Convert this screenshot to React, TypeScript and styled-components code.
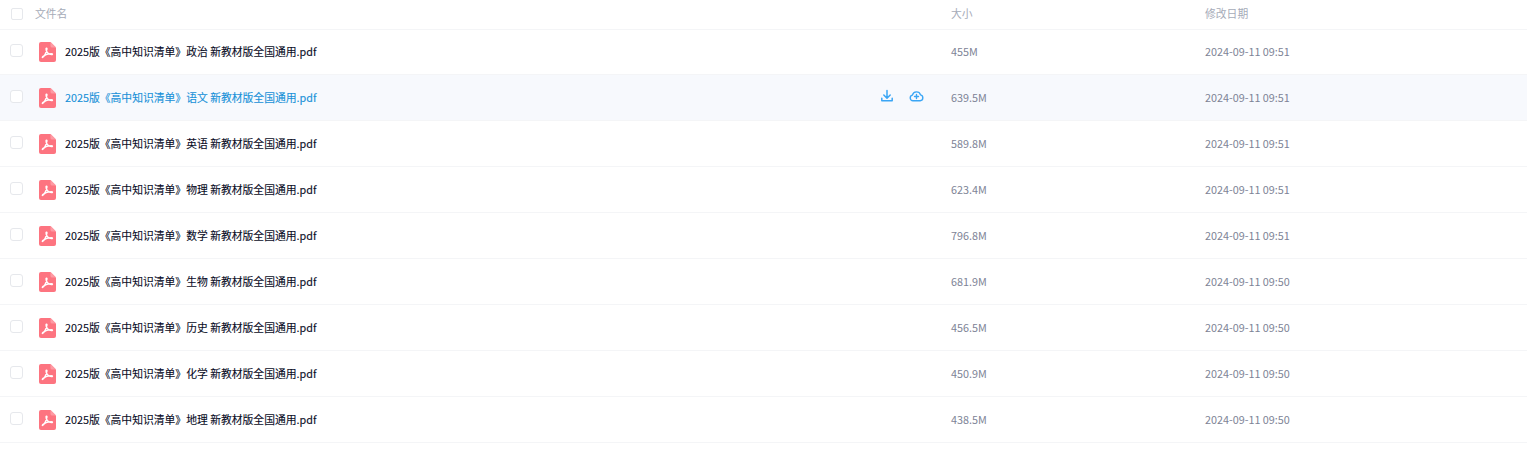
import * as React from 'react';
import styled, { createGlobalStyle } from 'styled-components';

const GlobalStyle = createGlobalStyle`
  html, body {
    margin: 0;
    padding: 0;
    background: #fff;
  }
  body {
    font-family: "Noto Sans CJK SC", "Noto Sans", sans-serif;
    font-size: 10.8px;
  }
`;

const files = [
  { subject: '政治', size: '455M', date: '2024-09-11 09:51' },
  { subject: '语文', size: '639.5M', date: '2024-09-11 09:51' },
  { subject: '英语', size: '589.8M', date: '2024-09-11 09:51' },
  { subject: '物理', size: '623.4M', date: '2024-09-11 09:51' },
  { subject: '数学', size: '796.8M', date: '2024-09-11 09:51' },
  { subject: '生物', size: '681.9M', date: '2024-09-11 09:50' },
  { subject: '历史', size: '456.5M', date: '2024-09-11 09:50' },
  { subject: '化学', size: '450.9M', date: '2024-09-11 09:50' },
  { subject: '地理', size: '438.5M', date: '2024-09-11 09:50' },
];

const HOVER_INDEX = 1;

function PdfIcon() {
  return (
    <svg width="17" height="20" viewBox="0 0 17 20" aria-hidden="true">
      <path d="M2 0h9.500L17 5.500V18a2 2 0 0 1-2 2H2a2 2 0 0 1-2-2V2a2 2 0 0 1 2-2z" fill="#fd7480" />
      <path d="M11.500 0L17 5.500h-4a1.500 1.500 0 0 1-1.500-1.500z" fill="#fe9aa3" />
      <path
        d="M3.500 15.500c1.800-1 3.500-4.500 4.500-8.500.2-1-.9-1.300-1-.2-.2 2.600 2.300 6 5.800 5.800 1-.1.900-1-.1-1-2.600-.1-6.300.9-8.600 2.700-.8.600-1 1.400-.6 1.200z"
        fill="none"
        stroke="#fff"
        strokeWidth="1.300"
        strokeLinejoin="round"
      />
    </svg>
  );
}

function DownloadIcon() {
  return (
    <svg width="14" height="14" viewBox="0 0 14 14" fill="none" stroke="currentColor" strokeWidth="1.500" aria-hidden="true">
      <path d="M7 1.500v7.300M3.800 6l3.200 3.200L10.200 6" strokeLinecap="round" strokeLinejoin="round" />
      <path d="M1.800 9.200v2.500h10.400V9.200" strokeLinecap="round" strokeLinejoin="round" />
    </svg>
  );
}

function CloudIcon() {
  return (
    <svg width="15" height="14" viewBox="0 0 15 14" fill="none" stroke="currentColor" strokeWidth="1.400" aria-hidden="true">
      <path
        d="M4 11.800a2.900 2.900 0 0 1-.6-5.700 4.200 4.200 0 0 1 8.100-.2 3 3 0 0 1-.3 5.900z"
        strokeLinejoin="round"
      />
      <path d="M7.500 5.500v4M5.500 7.500h4" strokeLinecap="round" />
    </svg>
  );
}

export default function App() {
  return (
    <>
      <GlobalStyle />
      <Table>
        <HeaderRow>
          <HeaderBox />
          <HeaderName>文件名</HeaderName>
          <SizeCell>大小</SizeCell>
          <DateCell>修改日期</DateCell>
        </HeaderRow>
        {files.map((file, index) => (
          <Row key={file.subject} $hover={index === HOVER_INDEX}>
            <RowBox />
            <IconSlot>
              <PdfIcon />
            </IconSlot>
            <FileName $hover={index === HOVER_INDEX}>
              2025版《高中知识清单》{file.subject} 新教材版全国通用.pdf
            </FileName>
            {index === HOVER_INDEX && (
              <Actions>
                <DownloadIcon />
                <CloudIcon />
              </Actions>
            )}
            <SizeCell>{file.size}</SizeCell>
            <DateCell>{file.date}</DateCell>
          </Row>
        ))}
      </Table>
    </>
  );
}

const Table = styled.div`
  width: 1527px;
  height: 468px;
  overflow: hidden;
`;

const HeaderRow = styled.div`
  display: flex;
  align-items: center;
  height: 30px;
  box-sizing: border-box;
  padding: 0 0 3px 11px;
  border-bottom: 1px solid #f4f5f7;
  color: #a6abb8;
`;

const HeaderBox = styled.span`
  width: 10px;
  height: 10px;
  margin-top: 1px;
  border: 1px solid #e6e8ec;
  border-radius: 2px;
  flex: none;
`;

const HeaderName = styled.div`
  margin-left: 12px;
  flex: 1;
`;

const Row = styled.div<{ $hover: boolean }>`
  display: flex;
  align-items: center;
  height: 46px;
  box-sizing: border-box;
  padding: 0 0 2px 10px;
  border-bottom: 1px solid #f4f5f7;
  background: ${({ $hover }) => ($hover ? '#f7f9fd' : '#fff')};
  color: #7d8396;

  &:nth-child(2) {
    height: 45px;
  }
`;

const RowBox = styled.span`
  width: 11px;
  height: 11px;
  margin-top: -1px;
  border: 1px solid #e6e8ec;
  border-radius: 3px;
  background: #fff;
  flex: none;
`;

const IconSlot = styled.div`
  display: flex;
  margin: 2px 1px 0 16px;
  flex: none;
`;

const FileName = styled.div<{ $hover: boolean }>`
  margin-left: 8px;
  flex: 1;
  -webkit-text-stroke: 0.1px currentColor;
  color: ${({ $hover }) => ($hover ? '#1590d8' : '#070a24')};
`;

const Actions = styled.div`
  display: flex;
  align-items: center;
  gap: 15px;
  margin-right: 27px;
  margin-top: -1px;
  color: #3ba6f5;
`;

const SizeCell = styled.div`
  width: 254px;
  flex: none;
`;

const DateCell = styled.div`
  width: 322px;
  flex: none;
`;
